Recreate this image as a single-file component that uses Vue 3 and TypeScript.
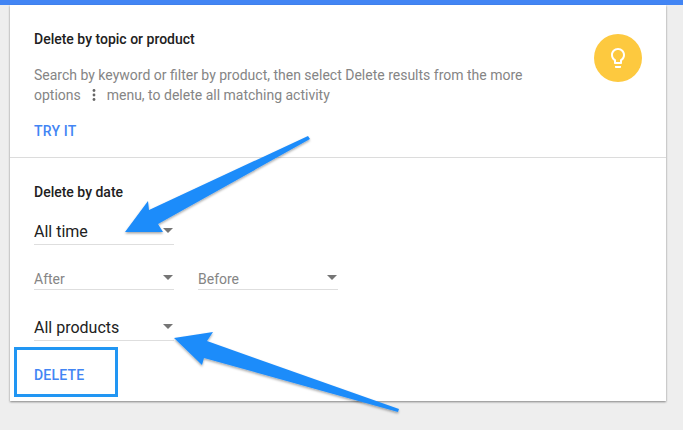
<script setup lang="ts">
const description =
  "Search by keyword or filter by product, then select Delete results from the more";
</script>

<template>
  <div class="page">
    <div class="top-bar"></div>
    <main class="card">
      <section class="topic">
        <div class="topic-text">
          <h3>Delete by topic or product</h3>
          <p>
            {{ description }}<br />
            options
            <svg class="dots" width="4" height="14" viewBox="0 0 4 14">
              <circle cx="2" cy="2.5" r="1.4" />
              <circle cx="2" cy="7" r="1.4" />
              <circle cx="2" cy="11.5" r="1.4" />
            </svg>
            menu, to delete all matching activity
          </p>
          <a class="link">TRY IT</a>
        </div>
        <div class="bulb">
          <svg width="24" height="24" viewBox="0 0 24 24" fill="#fff">
            <path
              d="M9 21c0 .55.45 1 1 1h4c.55 0 1-.45 1-1v-1H9v1zm3-19C8.14 2 5 5.14 5 9c0 2.38 1.19 4.47 3 5.74V17c0 .55.45 1 1 1h6c.55 0 1-.45 1-1v-2.26c1.81-1.27 3-3.36 3-5.74 0-3.86-3.14-7-7-7zm2.85 11.1l-.85.6V16h-4v-2.3l-.85-.6C7.8 12.16 7 10.63 7 9c0-2.76 2.24-5 5-5s5 2.24 5 5c0 1.63-.8 3.16-2.15 4.1z"
            />
          </svg>
        </div>
      </section>

      <section class="date">
        <h3>Delete by date</h3>
        <div class="select strong first">
          <span>All time</span><i class="caret"></i>
        </div>
        <div class="range">
          <div class="select"><span>After</span><i class="caret"></i></div>
          <div class="select"><span>Before</span><i class="caret"></i></div>
        </div>
        <div class="select strong products">
          <span>All products</span><i class="caret"></i>
        </div>
        <button class="delete">DELETE</button>
      </section>
    </main>

    <!-- annotation arrows drawn over the screenshot -->
    <svg class="arrows" width="683" height="430" viewBox="0 0 683 430">
      <defs>
        <filter id="arrow-shadow" x="-10%" y="-10%" width="120%" height="130%">
          <feDropShadow dx="0" dy="1.5" stdDeviation="1.2" flood-color="#000" flood-opacity="0.35" />
        </filter>
      </defs>
      <g fill="#1e8cfa" filter="url(#arrow-shadow)">
        <path d="M125 232 L148 201 L149 210 L308 136 L310 139 L158 224 L163 232 Z" />
        <path d="M174 338 L213 332 L207 341 L399 409 L398 412 L204 358 L202 365 Z" />
      </g>
    </svg>
  </div>
</template>

<style scoped>
.page {
  position: relative;
  width: 683px;
  height: 430px;
  overflow: hidden;
  background: #eeeeee;
  font-family: Roboto, "Liberation Sans", sans-serif;
}

.top-bar {
  height: 5px;
  background: #4285f4;
}

.card {
  width: 656px;
  height: 396px;
  margin-left: 10px;
  background: #fff;
  box-shadow: 0 1px 2px rgba(0, 0, 0, 0.45);
}

.topic {
  height: 153px;
  box-sizing: border-box;
  padding: 26px 24px 0;
  display: flex;
  justify-content: space-between;
  align-items: flex-start;
  border-bottom: 1px solid #dcdcdc;
}

h3 {
  margin: 0;
  font-size: 14px;
  line-height: 16px;
  font-weight: 500;
  color: #212121;
}

.topic-text p {
  margin: 18px 0 0;
  font-size: 14px;
  line-height: 20px;
  color: #858585;
}

.dots {
  fill: #666;
  margin: 0 7.5px;
  vertical-align: -2px;
}

.link {
  display: block;
  margin-top: 18px;
  font-size: 14px;
  line-height: 16px;
  font-weight: 500;
  letter-spacing: 0.2px;
  color: #4285f4;
}

.bulb {
  width: 48px;
  height: 48px;
  margin: 3px 0 0;
  border-radius: 50%;
  background: #fdc93f;
  display: flex;
  align-items: center;
  justify-content: center;
}

.date {
  padding: 26px 24px 0;
}

.select {
  width: 140px;
  height: 20px;
  padding-top: 2px;
  display: flex;
  align-items: center;
  justify-content: space-between;
  border-bottom: 1px solid #dedede;
  font-size: 14px;
  color: #858585;
}

.select.strong {
  height: 24px;
  font-size: 16px;
  color: #212121;
}

.select.strong span {
  margin-bottom: 2px;
}

.first {
  margin-top: 18px;
}

.range {
  display: flex;
  gap: 24px;
  margin-top: 22px;
}

.products {
  margin-top: 24px;
}

.caret {
  width: 0;
  height: 0;
  margin: 0 1px 4px 0;
  border-left: 5px solid transparent;
  border-right: 5px solid transparent;
  border-top: 5px solid #757575;
}

.delete {
  display: block;
  box-sizing: border-box;
  width: 104px;
  height: 50px;
  margin: 6px 0 0 -20px;
  padding: 6px 0 0 17px;
  border: 3px solid #2196f3;
  background: #fff;
  text-align: left;
  font-family: inherit;
  font-size: 14px;
  font-weight: 500;
  letter-spacing: 0.2px;
  color: #4285f4;
}

.arrows {
  position: absolute;
  top: 0;
  left: 0;
  pointer-events: none;
}
</style>

<style>
body {
  background: #eeeeee;
}
</style>
